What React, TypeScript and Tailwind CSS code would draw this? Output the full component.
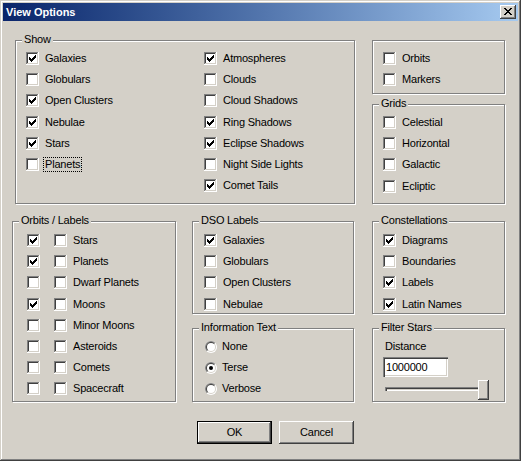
import React from 'react';

const CHECK_PIXELS = ['......X', '.....XX', 'X...XXX', 'XX.XXX.', 'XXXXX..', '.XXX...', '..X....'];
const CLOSE_PIXELS = ['XX....XX', '.XX..XX.', '..XXXX..', '...XX...', '..XXXX..', '.XX..XX.', 'XX....XX'];

const Pixels = ({ rows, x, y }: { rows: string[]; x: number; y: number }) => (
  <>
    {rows.flatMap((row, r) =>
      row.split('').map((c, i) => (c === 'X' ? <rect key={`${r}-${i}`} x={x + i} y={y + r} width={1} height={1} fill="#000" /> : null)),
    )}
  </>
);

const Check = ({ checked }: { checked?: boolean }) => (
  <svg width="13" height="13" viewBox="0 0 13 13" shapeRendering="crispEdges" className="shrink-0">
    <rect x="0" y="0" width="13" height="13" fill="#fff" />
    <rect x="0" y="0" width="12" height="1" fill="#808080" />
    <rect x="0" y="0" width="1" height="12" fill="#808080" />
    <rect x="1" y="1" width="10" height="1" fill="#404040" />
    <rect x="1" y="1" width="1" height="10" fill="#404040" />
    <rect x="11" y="1" width="1" height="11" fill="#d4d0c8" />
    <rect x="1" y="11" width="11" height="1" fill="#d4d0c8" />
    {checked && <Pixels rows={CHECK_PIXELS} x={3} y={3} />}
  </svg>
);

const half = (r: number) => {
  const d = r * Math.SQRT1_2;
  return `M ${6 - d} ${6 + d} A ${r} ${r} 0 0 1 ${6 + d} ${6 - d} Z`;
};

const Radio = ({ checked }: { checked?: boolean }) => (
  <svg width="12" height="12" viewBox="0 0 12 12" className="shrink-0">
    <circle cx="6" cy="6" r="6" fill="#fff" />
    <path d={half(6)} fill="#808080" />
    <circle cx="6" cy="6" r="5" fill="#d4d0c8" />
    <path d={half(5)} fill="#404040" />
    <circle cx="6" cy="6" r="4" fill="#fff" />
    {checked && <circle cx="6" cy="6" r="2" fill="#000" />}
  </svg>
);

const GroupBox = ({ label, className, children }: { label?: string; className: string; children: React.ReactNode }) => (
  <div className={`relative border border-[#808080] shadow-[inset_1px_1px_#fff,1px_1px_#fff] ${className}`}>
    {label && <span className="absolute left-[6px] top-[-8px] bg-[#d4d0c8] px-[2px] leading-[13px]">{label}</span>}
    {children}
  </div>
);

const CheckRow = ({ label, checked, focus }: { label: string; checked?: boolean; focus?: boolean }) => (
  <div className="flex h-[21.2px] items-center">
    <Check checked={checked} />
    {focus ? (
      <span className="ml-[4px] border border-dotted border-black px-[1px] leading-[13px]">{label}</span>
    ) : (
      <span className="ml-[6px] leading-[13px]">{label}</span>
    )}
  </div>
);

const RadioRow = ({ label, checked }: { label: string; checked?: boolean }) => (
  <div className="flex h-[21px] items-center">
    <Radio checked={checked} />
    <span className="ml-[5px] leading-[13px]">{label}</span>
  </div>
);

const raised = 'shadow-[inset_-1px_-1px_#404040,inset_1px_1px_#fff,inset_-2px_-2px_#808080,inset_2px_2px_#d4d0c8]';
const sunken = 'shadow-[inset_1px_1px_#808080,inset_2px_2px_#404040,inset_-1px_-1px_#fff,inset_-2px_-2px_#d4d0c8]';

const showLeft: [string, boolean][] = [
  ['Galaxies', true],
  ['Globulars', false],
  ['Open Clusters', true],
  ['Nebulae', true],
  ['Stars', true],
];
const showRight: [string, boolean][] = [
  ['Atmospheres', true],
  ['Clouds', false],
  ['Cloud Shadows', false],
  ['Ring Shadows', true],
  ['Eclipse Shadows', true],
  ['Night Side Lights', false],
  ['Comet Tails', true],
];
const bodies: [string, boolean][] = [
  ['Stars', true],
  ['Planets', true],
  ['Dwarf Planets', false],
  ['Moons', true],
  ['Minor Moons', false],
  ['Asteroids', false],
  ['Comets', false],
  ['Spacecraft', false],
];

export default function App() {
  return (
    <div className="h-[461px] w-[521px] bg-[#d4d0c8] p-[3px] font-['Liberation_Sans',Arial,sans-serif] text-[11px] tracking-[-0.2px] text-black shadow-[inset_-1px_-1px_#404040,inset_1px_1px_#d4d0c8,inset_-2px_-2px_#808080,inset_2px_2px_#fff]">
      <div className="flex h-[18px] items-center justify-between bg-linear-to-r from-[#0a246a] to-[#a6caf0] pl-[3px] pr-[2px]">
        <span className="font-bold tracking-normal text-white">View Options</span>
        <div className={`h-[14px] w-[16px] bg-[#d4d0c8] ${raised}`}>
          <svg width="16" height="14" viewBox="0 0 16 14" shapeRendering="crispEdges">
            <Pixels rows={CLOSE_PIXELS} x={4} y={3} />
          </svg>
        </div>
      </div>

      <div className="mt-[19px] flex">
        <GroupBox label="Show" className="ml-[12px] h-[164px] w-[340px] pl-[10px] pt-[7px]">
          <div className="grid grid-cols-[178px_1fr]">
            <div>
              {showLeft.map(([l, c]) => (
                <CheckRow key={l} label={l} checked={c} />
              ))}
              <CheckRow label="Planets" focus />
            </div>
            <div>
              {showRight.map(([l, c]) => (
                <CheckRow key={l} label={l} checked={c} />
              ))}
            </div>
          </div>
        </GroupBox>
        <div className="ml-[17px] flex w-[133px] flex-col">
          <GroupBox className="h-[54px] pl-[10px] pt-[7px]">
            <CheckRow label="Orbits" />
            <CheckRow label="Markers" />
          </GroupBox>
          <GroupBox label="Grids" className="mt-[10px] h-[100px] pl-[10px] pt-[7px]">
            <CheckRow label="Celestial" />
            <CheckRow label="Horizontal" />
            <CheckRow label="Galactic" />
            <CheckRow label="Ecliptic" />
          </GroupBox>
        </div>
      </div>

      <div className="mt-[17px] flex">
        <GroupBox label="Orbits / Labels" className="ml-[9px] h-[181px] w-[164px] pl-[14px] pt-[8px]">
          {bodies.map(([l, c]) => (
            <div key={l} className="flex h-[21.2px] items-center">
              <Check checked={c} />
              <span className="ml-[14px]">
                <Check />
              </span>
              <span className="ml-[6px] leading-[13px]">{l}</span>
            </div>
          ))}
        </GroupBox>
        <div className="ml-[16px] flex w-[162px] flex-col">
          <GroupBox label="DSO Labels" className="h-[93px] pl-[11px] pt-[8px]">
            <CheckRow label="Galaxies" checked />
            <CheckRow label="Globulars" />
            <CheckRow label="Open Clusters" />
            <CheckRow label="Nebulae" />
          </GroupBox>
          <GroupBox label="Information Text" className="mt-[14px] h-[74px] pl-[12px] pt-[7px]">
            <RadioRow label="None" />
            <RadioRow label="Terse" checked />
            <RadioRow label="Verbose" />
          </GroupBox>
        </div>
        <div className="ml-[18px] flex w-[133px] flex-col">
          <GroupBox label="Constellations" className="h-[93px] pl-[10px] pt-[8px]">
            <CheckRow label="Diagrams" checked />
            <CheckRow label="Boundaries" />
            <CheckRow label="Labels" checked />
            <CheckRow label="Latin Names" checked />
          </GroupBox>
          <GroupBox label="Filter Stars" className="mt-[14px] h-[74px] pl-[10px] pt-[11px]">
            <p className="ml-[2px] leading-[13px]">Distance</p>
            <div className={`mt-[4px] flex h-[20px] w-[65px] items-center bg-white pl-[3px] ${sunken}`}>1000000</div>
            <div className="relative ml-[2px] mt-[3px] h-[20px] w-[104px]">
              <div className={`absolute left-0 right-[4px] top-[7px] h-[4px] ${sunken}`} />
              <div className={`absolute right-0 top-0 h-[20px] w-[11px] bg-[#d4d0c8] ${raised}`} />
            </div>
          </GroupBox>
        </div>
      </div>

      <div className="mt-[19px] flex">
        <button
          type="button"
          className="ml-[194px] flex h-[23px] w-[75px] items-center justify-center bg-[#d4d0c8] shadow-[inset_0_0_0_1px_#000,inset_-2px_-2px_#404040,inset_2px_2px_#fff,inset_-3px_-3px_#808080]"
        >
          OK
        </button>
        <button type="button" className={`ml-[7px] flex h-[23px] w-[75px] items-center justify-center bg-[#d4d0c8] ${raised}`}>
          Cancel
        </button>
      </div>
    </div>
  );
}
